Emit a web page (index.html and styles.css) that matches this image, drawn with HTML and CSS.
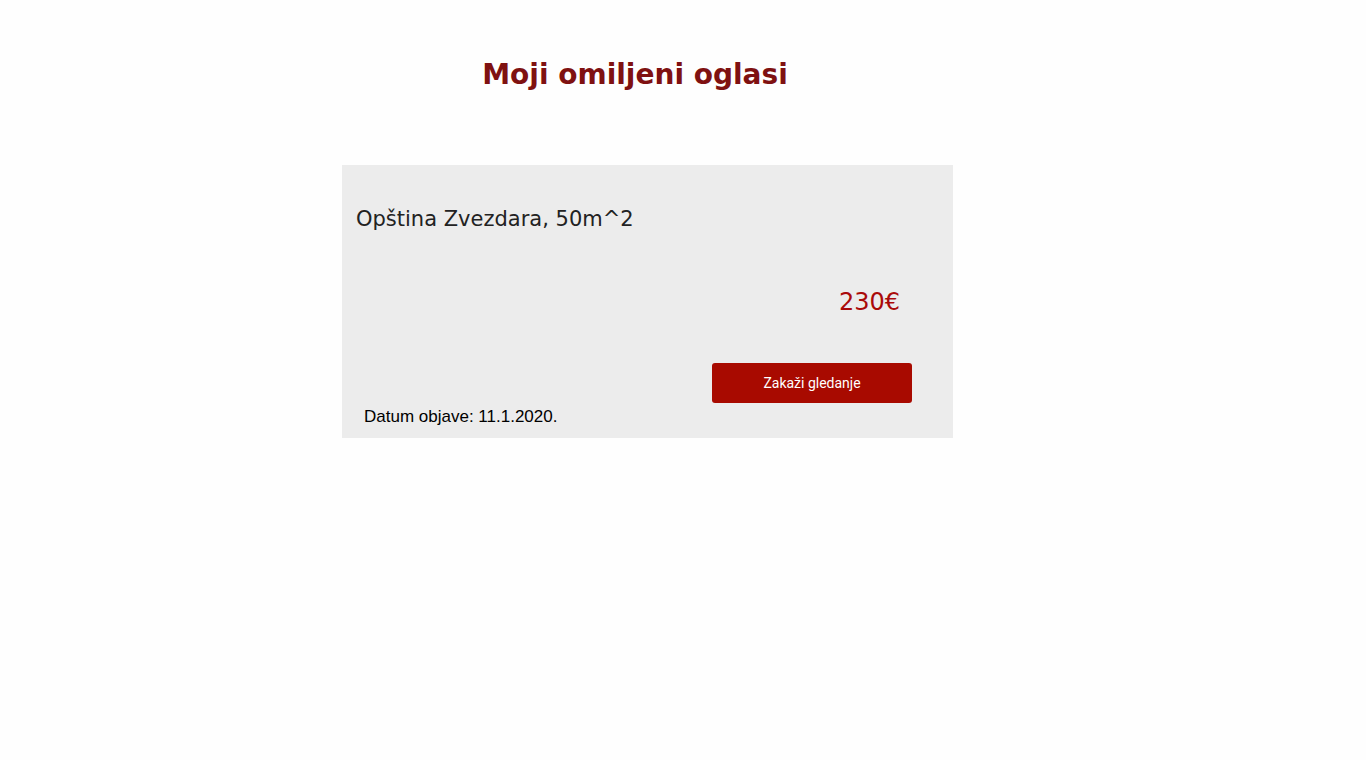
FILE: index.html
```html
<!DOCTYPE html>
<html lang="sr">
<head>
<meta charset="utf-8">
<title>Moji omiljeni oglasi</title>
<link rel="stylesheet" href="styles.css">
</head>
<body>
<main class="page">
  <h1 class="page-title">Moji omiljeni oglasi</h1>
  <section class="listing">
    <article class="card">
      <h2 class="card-title">Opština Zvezdara, 50m^2</h2>
      <div class="price-row"><span class="price">230€</span></div>
      <div class="action-row"><button class="btn">Zakaži gledanje</button></div>
      <p class="date">Datum objave: 11.1.2020.</p>
    </article>
  </section>
</main>
</body>
</html>
```

FILE: styles.css
```css
html, body {
  margin: 0;
  padding: 0;
  background: #fefefe;
}
.page {
  display: flex;
  flex-direction: column;
  padding-top: 53px;
}
.page-title {
  margin: 0;
  width: 1270px;
  text-align: center;
  font-family: "DejaVu Sans", sans-serif;
  font-weight: bold;
  font-size: 28px;
  line-height: 44px;
  color: #7f1111;
}
.listing {
  display: flex;
  padding-left: 342px;
  margin-top: 68px;
}
.card {
  width: 611px;
  height: 273px;
  box-sizing: border-box;
  background: #ececec;
  display: flex;
  flex-direction: column;
  padding: 0 0 0 14px;
}
.card-title {
  margin: 39px 0 0 0;
  font-family: "DejaVu Sans", sans-serif;
  font-weight: normal;
  font-size: 21px;
  line-height: 30px;
  color: #222222;
}
.price-row {
  display: flex;
  justify-content: flex-end;
  padding-right: 53px;
  margin-top: 53px;
}
.price {
  font-family: "DejaVu Sans", sans-serif;
  font-size: 24px;
  line-height: 30px;
  color: #aa0a0a;
}
.action-row {
  display: flex;
  justify-content: flex-end;
  padding-right: 41px;
  margin-top: 46px;
}
.btn {
  width: 200px;
  height: 40px;
  border: none;
  border-radius: 3px;
  background: #a80a00;
  color: #ffffff;
  font-family: Roboto, sans-serif;
  font-size: 14px;
}
.date {
  margin: 3px 0 0 8px;
  font-family: "Liberation Sans", Arial, sans-serif;
  font-size: 17px;
  line-height: 22px;
  color: #000000;
}
```
